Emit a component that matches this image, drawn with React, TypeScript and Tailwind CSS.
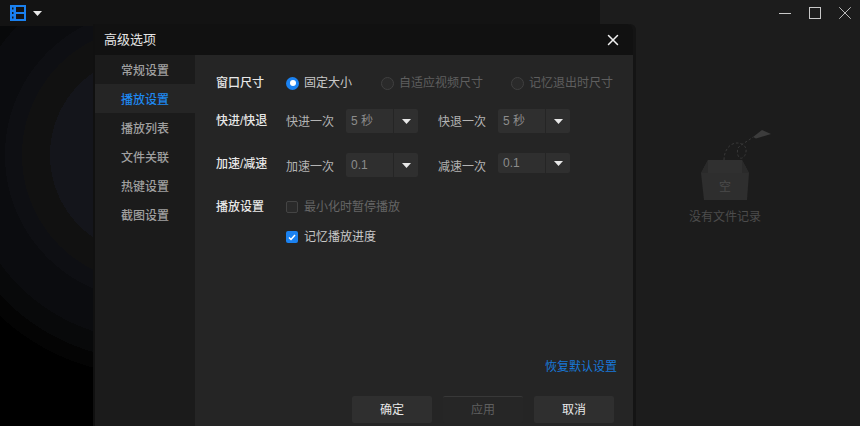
import { X } from "lucide-react"

const font = "font-['Liberation_Sans','Noto_Sans_CJK_SC',sans-serif]"
const navItems = ["常规设置", "播放设置", "播放列表", "文件关联", "热键设置", "截图设置"]

function Caret() {
  return (
    <svg width="9" height="5" viewBox="0 0 9 5">
      <path d="M0 0h9L4.5 5z" fill="#e8e8e8" />
    </svg>
  )
}

function Select({ value, short }: { value: string; short?: boolean }) {
  return (
    <div className={`flex w-[72px] rounded-[2px] bg-[#2f2f2f] ${short ? "h-5 self-start" : "h-6"}`}>
      <div className="flex w-[47px] items-center pl-[5px] text-[12px] text-[#8c8c8c]">{value}</div>
      <div className="flex flex-1 items-center justify-center border-l border-[#252525]">
        <Caret />
      </div>
    </div>
  )
}

function Radio({ label, checked, width }: { label: string; checked?: boolean; width: string }) {
  return (
    <div className={`flex items-center ${width}`}>
      {checked ? (
        <span className="flex size-[13px] items-center justify-center rounded-full bg-[#1b82f1]">
          <span className="size-[6px] rounded-full bg-white" />
        </span>
      ) : (
        <span className="size-[13px] rounded-full border border-[#404040] bg-[#2a2a2a]" />
      )}
      <span className={`ml-[5px] ${checked ? "text-[#c8c8c8]" : "text-[#5f5f5f]"}`}>{label}</span>
    </div>
  )
}

function FilmIcon() {
  return (
    <svg width="16" height="16" viewBox="0 0 16 16">
      <path
        fillRule="evenodd"
        fill="#1a80ee"
        d="M0 0h16v16H0zM2 2.5v2h1.5v-2zM2 7v2h1.5V7zM2 11.5v2h1.5v-2zM6 2v5h8V2zM6 9v5h8V9z"
      />
    </svg>
  )
}

function EmptyBox() {
  return (
    <svg width="76" height="74" viewBox="0 0 76 74">
      <path d="M53 8l9-7 9 4-10 3-5 1.5z" fill="#3c3c3c" />
      <path
        d="M24 31c0-10 6-17 13-17 6 0 10 4 9 9-1 5-4 7-6 6-3-2-3-7-2-10 3-4 9-6 15-11"
        fill="none"
        stroke="#383838"
        strokeWidth="1"
        strokeDasharray="2.5 2"
      />
      <path d="M8 31h34l7 13H1z" fill="#303030" />
      <path d="M1 44l7-13v13zM49 44l-7-13v13z" fill="#2a2a2a" />
      <path d="M1 44h48l-2 27H4z" fill="#2e2e2e" />
      <text x="25" y="62" textAnchor="middle" fontSize="12" fill="#4b4b4b" fontFamily="Noto Sans CJK SC">
        空
      </text>
    </svg>
  )
}

export default function App() {
  return (
    <div className={`relative h-[443px] w-[860px] overflow-hidden bg-white text-[12px] ${font}`}>
      <div className="flex h-[426px]">
        <div className="flex w-[600px] flex-col bg-black">
          <div className="flex h-[26px] items-center gap-[7px] bg-[#131313] pl-[10px]">
            <FilmIcon />
            <Caret />
          </div>
          <div className="flex-1 bg-[radial-gradient(circle_at_150px_129px,#14151b_0,#14151b_100px,#111111_100px,#111111_128px,#0e0f13_128px,#0e0f13_145px,#0b0c0f_145px,#0b0c0f_185px,#08090a_185px,#08090a_205px,#040404_205px,#040404_220px,#000_220px)]" />
        </div>
        <div className="flex flex-1 flex-col bg-[#1c1c1c]">
          <div className="flex h-[26px] items-center justify-end">
            <div className="flex h-[26px] w-[30px] items-center justify-center">
              <span className="h-px w-3 bg-[#c8c8c8]" />
            </div>
            <div className="flex h-[26px] w-[30px] items-center justify-center">
              <span className="size-3 border border-[#c8c8c8]" />
            </div>
            <div className="flex h-[26px] w-[30px] items-center justify-center">
              <X size={22} strokeWidth={1} color="#c8c8c8" />
            </div>
          </div>
          <div className="mt-[103px] flex flex-col items-center pr-[10px]">
            <div className="ml-[26px]">
              <EmptyBox />
            </div>
            <span className="mt-[5px] text-[12px] text-[#4c4c4c]">没有文件记录</span>
          </div>
        </div>
      </div>

      <div className="absolute left-[95px] top-6 flex h-[402px] w-[538px] flex-col rounded-tr-md shadow-[3px_0_0_#141414,-2px_0_0_#101010]">
        <div className="flex h-[31px] items-center justify-between rounded-tr-md bg-[#111111] pl-[9px] pr-[11px]">
          <span className="text-[13px] text-[#e6e6e6]">高级选项</span>
          <X size={18} strokeWidth={2} color="#f0f0f0" />
        </div>
        <div className="flex flex-1">
          <div className="w-[100px] bg-[#1b1b1b]">
            {navItems.map((item, i) => (
              <div
                key={item}
                className={`flex h-[29px] items-center pl-[26px] pt-[2px] font-medium ${
                  i === 1 ? "bg-[#252525] text-[#1e88f0]" : "text-[#a0a0a0]"
                }`}
              >
                {item}
              </div>
            ))}
          </div>
          <div className="flex flex-1 flex-col bg-[#252525] pl-[21px] pt-[19px]">
            <div className="flex h-[18px] items-center">
              <span className="w-[70px] font-medium text-[#e8e8e8]">窗口尺寸</span>
              <Radio label="固定大小" checked width="w-[95px]" />
              <Radio label="自适应视频尺寸" width="w-[130px]" />
              <Radio label="记忆退出时尺寸" width="w-[110px]" />
            </div>
            <div className="mt-[17px] flex h-6 items-center">
              <span className="w-[70px] font-medium text-[#e8e8e8]">快进/快退</span>
              <span className="w-[60px] pt-[2px] text-[#b4b4b4]">快进一次</span>
              <Select value="5 秒" />
              <span className="ml-5 w-[60px] pt-[2px] text-[#b4b4b4]">快退一次</span>
              <Select value="5 秒" />
            </div>
            <div className="mt-5 flex h-6 items-center">
              <span className="w-[70px] pb-[2px] font-medium text-[#e8e8e8]">加速/减速</span>
              <span className="w-[60px] pt-1 text-[#b4b4b4]">加速一次</span>
              <Select value="0.1" />
              <span className="ml-5 w-[60px] pt-1 text-[#b4b4b4]">减速一次</span>
              <Select value="0.1" short />
            </div>
            <div className="mt-[20px] flex h-[20px] items-center">
              <span className="w-[70px] font-medium text-[#e8e8e8]">播放设置</span>
              <span className="size-3 rounded-[2px] border border-[#444444] bg-[#2a2a2a]" />
              <span className="ml-1.5 text-[#666666]">最小化时暂停播放</span>
            </div>
            <div className="mt-[10px] flex h-[20px] items-center pl-[70px]">
              <span className="flex size-3 items-center justify-center rounded-[2px] bg-[#1b82f1]">
                <svg width="8" height="7" viewBox="0 0 8 7">
                  <path d="M1 3.5l2 2L7 1" fill="none" stroke="#fff" strokeWidth="1.5" />
                </svg>
              </span>
              <span className="ml-1.5 text-[#c8c8c8]">记忆播放进度</span>
            </div>
            <div className="mt-[111px] flex justify-end pr-4 text-[#1878d8]">恢复默认设置</div>
            <div className="mt-[20px] flex gap-[11px] pl-[136px]">
              <div className="flex h-[27px] w-20 items-center justify-center rounded-[2px] bg-[#2f2f2f] text-[#e8e8e8]">确定</div>
              <div className="flex h-[27px] w-20 items-center justify-center rounded-[2px] border-t border-[#383838] bg-[#262626] text-[#5f5f5f]">应用</div>
              <div className="flex h-[27px] w-20 items-center justify-center rounded-[2px] bg-[#2f2f2f] text-[#e8e8e8]">取消</div>
            </div>
          </div>
        </div>
      </div>
    </div>
  )
}
